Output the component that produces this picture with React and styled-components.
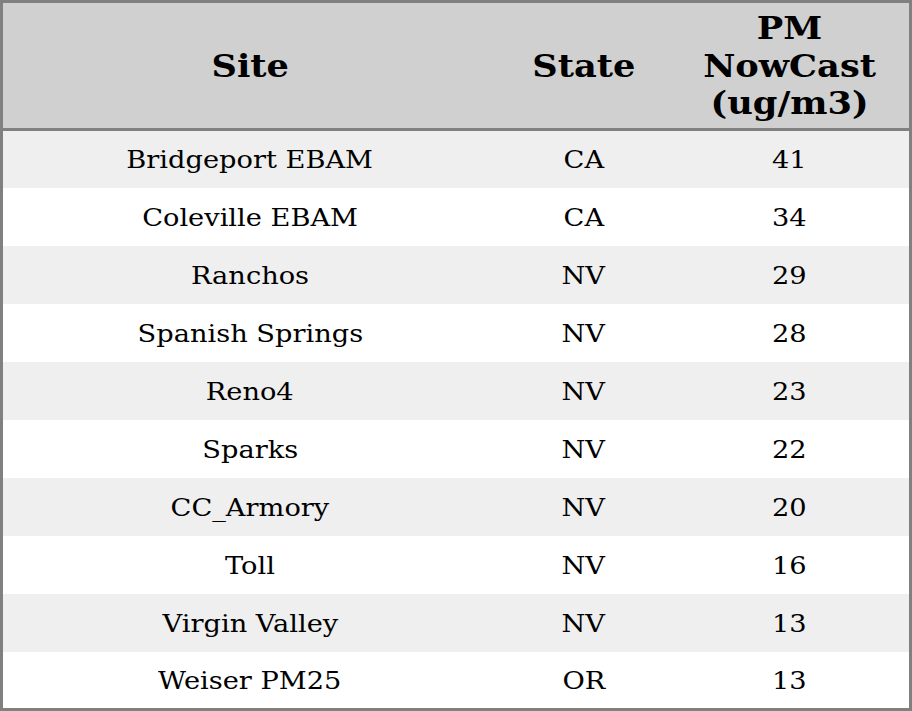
import styled, { createGlobalStyle } from "styled-components";

const GlobalStyle = createGlobalStyle`
  html, body {
    margin: 0;
    padding: 0;
    background: #ffffff;
  }
`;

const Table = styled.table`
  width: 912px;
  height: 711px;
  border-collapse: collapse;
  border: 3px solid #808080;
  font-family: "DejaVu Serif", serif;
  color: #000;
`;

const HeadCell = styled.th`
  box-sizing: border-box;
  background: #d0d0d0;
  font-size: 32px;
  font-weight: bold;
  line-height: 37.5px;
  height: 128px;
  padding: 2px 0 0;
  text-align: center;
  width: ${(p) => p.w}px;
  border-bottom: 3px solid #808080;
`;

// the reference text is drawn a little wider than the font's natural width
const Wide = styled.span`
  display: inline-block;
  transform: scaleX(${(p) => p.sx});
  transform-origin: center;
`;

const Row = styled.tr`
  background: ${(p) => (p.odd ? "#efefef" : "#ffffff")};
`;

const Cell = styled.td`
  box-sizing: border-box;
  font-size: 24px;
  text-align: center;
  padding: 2px 0 0;
  height: 54px;
`;

const rows = [
  ["Bridgeport EBAM", "CA", 41],
  ["Coleville EBAM", "CA", 34],
  ["Ranchos", "NV", 29],
  ["Spanish Springs", "NV", 28],
  ["Reno4", "NV", 23],
  ["Sparks", "NV", 22],
  ["CC_Armory", "NV", 20],
  ["Toll", "NV", 16],
  ["Virgin Valley", "NV", 13],
  ["Weiser PM25", "OR", 13],
];

export default function App() {
  return (
    <>
      <GlobalStyle />
      <Table>
        <thead>
          <tr>
            <HeadCell w={494}>
              <Wide sx={1.1}>Site</Wide>
            </HeadCell>
            <HeadCell w={172}>
              <Wide sx={1.1}>State</Wide>
            </HeadCell>
            <HeadCell w={240}>
              <Wide sx={1.1}>
                PM
                <br />
                NowCast
                <br />
                (ug/m3)
              </Wide>
            </HeadCell>
          </tr>
        </thead>
        <tbody>
          {rows.map(([site, state, value], i) => (
            <Row key={site} odd={i % 2 === 0}>
              <Cell>
                <Wide sx={1.135}>{site}</Wide>
              </Cell>
              <Cell>
                <Wide sx={1.135}>{state}</Wide>
              </Cell>
              <Cell>
                <Wide sx={1.135}>{value}</Wide>
              </Cell>
            </Row>
          ))}
        </tbody>
      </Table>
    </>
  );
}
